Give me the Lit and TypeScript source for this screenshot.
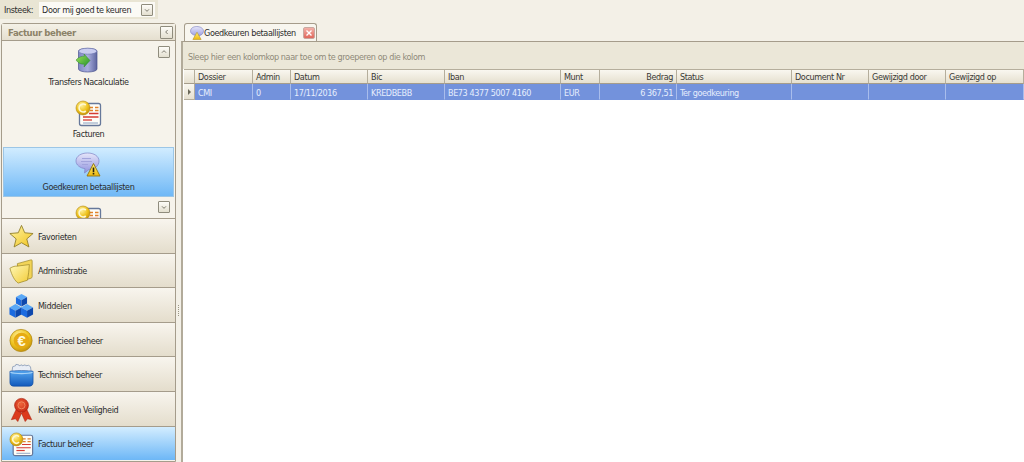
import { LitElement, html, css, svg } from "lit";
import { customElement } from "lit/decorators.js";

const defs = svg`
<defs>
  <linearGradient id="gCyl" x1="0" x2="1" y1="0" y2="0"><stop offset="0" stop-color="#7f88c4"/><stop offset=".5" stop-color="#a9aede"/><stop offset="1" stop-color="#5d659f"/></linearGradient>
  <linearGradient id="gGreen" x1="0" x2="1" y1="0" y2="1"><stop offset="0" stop-color="#a2e45a"/><stop offset="1" stop-color="#1f8f2c"/></linearGradient>
  <radialGradient id="gCoin" cx=".4" cy=".3" r=".8"><stop offset="0" stop-color="#fff2a0"/><stop offset=".55" stop-color="#eec21c"/><stop offset="1" stop-color="#b98406"/></radialGradient>
  <linearGradient id="gBubble" x1="0" x2="0" y1="0" y2="1"><stop offset="0" stop-color="#e6e6fa"/><stop offset="1" stop-color="#8f92de"/></linearGradient>
  <linearGradient id="gWarn" x1="0" x2="0" y1="0" y2="1"><stop offset="0" stop-color="#fff27a"/><stop offset="1" stop-color="#eeb70e"/></linearGradient>
  <linearGradient id="gStar" x1="0" x2="1" y1="0" y2="1"><stop offset="0" stop-color="#fff6a6"/><stop offset="1" stop-color="#f0c21e"/></linearGradient>
  <linearGradient id="gFolder" x1="0" x2="1" y1="0" y2="1"><stop offset="0" stop-color="#fff8b8"/><stop offset="1" stop-color="#f2cc38"/></linearGradient>
  <linearGradient id="gTray" x1="0" x2="0" y1="0" y2="1"><stop offset="0" stop-color="#55a6ef"/><stop offset="1" stop-color="#1259bb"/></linearGradient>
  <radialGradient id="gRib" cx=".45" cy=".4" r=".7"><stop offset="0" stop-color="#f0653a"/><stop offset="1" stop-color="#c0200f"/></radialGradient>
</defs>`;

const invoice = svg`
  <rect x="4.500" y="3.500" width="21" height="22" rx="2" fill="#fdfdf8" stroke="#66789a" stroke-width="1.300"/>
  <path d="M14 7.500h4M20 7.500h3.500M15 10.500h3M20 10.500h3.500" stroke="#e2832c" stroke-width="1.300"/>
  <path d="M14 13.500h9.500M8 17h15.500" stroke="#d63b32" stroke-width="1.300"/>
  <path d="M8 20h9" stroke="#d63b32" stroke-width="1.300"/>
  <path d="M8 23h15" stroke="#8aa0c0" stroke-width="1"/>
  <circle cx="8" cy="8" r="7" fill="url(#gCoin)" stroke="#b08712" stroke-width=".6"/>
  <path d="M10.800 5a4 4 0 1 0 0 6" fill="none" stroke="#fff8d0" stroke-width="1.700"/>`;

const cube = (x: number, y: number, s: number) => svg`
  <path d="M${x} ${y + s * .28}L${x + s * .5} ${y}L${x + s} ${y + s * .28}L${x + s * .5} ${y + s * .56}z" fill="#5aa8f6"/>
  <path d="M${x} ${y + s * .28}L${x + s * .5} ${y + s * .56}V${y + s * 1.14}L${x} ${y + s * .86}z" fill="#1c6be0"/>
  <path d="M${x + s} ${y + s * .28}L${x + s * .5} ${y + s * .56}V${y + s * 1.14}L${x + s} ${y + s * .86}z" fill="#0e48ad"/>`;

const icons: Record<string, unknown> = {
  db: svg`
    <path d="M3.500 4c0-3.500 18.500-3.500 18.500 0v18c0 4-18.500 4-18.500 0z" fill="url(#gCyl)" stroke="#4c5490" stroke-width=".7"/>
    <ellipse cx="12.750" cy="4.200" rx="9" ry="3" fill="#c9ccf0" stroke="#6a72ad" stroke-width=".6"/>
    <path d="M1 13c2.500-3 6-4 8.500-3.800L9 7l6 6.500-6 6.500.4-2.800C6 17.500 3 16 1 13z" fill="url(#gGreen)" stroke="#2f8a2a" stroke-width=".5" stroke-linejoin="round"/>`,
  invoice,
  bubble: svg`
    <path d="M12.500 1c6.500 0 11.500 3.200 11.500 8s-4.500 8.500-10 8.500l-4.500 3.500.5-4.300C5 16 1 13 1 9 1 4.200 6 1 12.500 1z" fill="url(#gBubble)" stroke="#8083c4" stroke-width=".7"/>
    <path d="M7 6.500h9M6 9.500h11M7 12.500h6" stroke="#a2a4dc" stroke-width="1"/>
    <path d="M18.500 11.500l6.500 12.500H12z" fill="url(#gWarn)" stroke="#8f7410" stroke-width=".9" stroke-linejoin="round"/>
    <path d="M18.500 15.500v4.500M18.500 20.800v1.700" stroke="#2a2410" stroke-width="1.600"/>`,
  star: svg`<path d="M13.500 1.500l3.500 8 9 .8-6.800 5.800 2.300 8.700-8-4.600-8 4.600 2.200-8.700L.9 10.300l9.100-.8z" fill="url(#gStar)" stroke="#8b7a24" stroke-width=".9" stroke-linejoin="round"/>`,
  folder: svg`
    <path d="M9 5L23.500 1c1-.3 1.500.3 1.500 1.200V19c0 1-.5 1.500-1.200 1.700L11 25z" fill="#f2d458" stroke="#a08a2a" stroke-width=".8"/>
    <path d="M1 10c3-2 6-2.500 8-2.300L22 6c-.5 6-1 12-2.200 17L10 26C6.500 24 3 18 1 10z" fill="url(#gFolder)" stroke="#a08a2a" stroke-width=".8" stroke-linejoin="round"/>`,
  cubes: svg`${cube(7.500, 1, 12)}${cube(0.500, 12, 13)}${cube(13, 12, 13)}`,
  coin: svg`
    <circle cx="13" cy="13.500" r="12" fill="url(#gCoin)" stroke="#b08712" stroke-width=".8"/>
    <circle cx="13.500" cy="13.500" r="8.500" fill="#e6aa12"/>
    <text x="13.500" y="19" text-anchor="middle" font-family="Liberation Sans" font-size="16" font-weight="700" fill="#fffbe0">€</text>`,
  tray: svg`
    <path d="M3 11l1-7 3-1 .5-1.500 3 .5.5 1 3-1 .5 1 3-1 .7 1 3-.5 2 1.500 1 7z" fill="#e8edf5" stroke="#6f86a8" stroke-width=".7"/>
    <path d="M1 9c4-1 21-1 25 0v12c0 3-2 4-4 4H5c-2 0-4-1-4-4z" fill="url(#gTray)" stroke="#0f4b9e" stroke-width=".7"/>
    <path d="M1.500 10c5 2 19 2 24 0" fill="none" stroke="#a6d2f8" stroke-width="1.200"/>`,
  ribbon: svg`
    <path d="M8.500 12L2.500 24.500l4.500-1L9.500 26.500l4-9zM18.500 12l6 12.500-4.500-1L17.500 26.500l-4-9z" fill="#dc3a1c" stroke="#a8200f" stroke-width=".6"/>
    <circle cx="13.500" cy="9" r="7.500" fill="url(#gRib)" stroke="#a8200f" stroke-width=".7"/>
    <circle cx="13.500" cy="9" r="3.800" fill="none" stroke="#f08a60" stroke-width="1"/>`,
  tabBubble: svg`
    <path d="M13 1c7 0 13 3.500 13 9s-5.500 9-11.500 9l-5 3.500 1-4.300C5 17 1 14 1 10 1 4.500 6 1 13 1z" fill="url(#gBubble)" stroke="#7c80c0" stroke-width="1.200"/>
    <path d="M13.500 12l8 14h-16z" fill="url(#gWarn)" stroke="#a68410" stroke-width=".9" stroke-linejoin="round"/>`,
};

const icon = (n: string, cls = "ic") =>
  html`<svg class=${cls} viewBox="0 0 27 27">${icons[n]}</svg>`;

const chev = (d: string) => {
  const p = d === "up" ? "M3 7l3-3 3 3" : d === "down" ? "M3 5l3 3 3-3" : "M7 3L4 6l3 3";
  return html`<svg viewBox="0 0 12 12" width="8" height="8"><path d=${p} fill="none" stroke="#5d5a4e" stroke-width="1.200"/></svg>`;
};

const cols = ["", "Dossier", "Admin", "Datum", "Bic", "Iban", "Munt", "Bedrag", "Status", "Document Nr", "Gewijzigd door", "Gewijzigd op"];
const row = ["", "CMI", "0", "17/11/2016", "KREDBEBB", "BE73 4377 5007 4160", "EUR", "6 367,51", "Ter goedkeuring", "", "", ""];
const nav = [
  ["star", "Favorieten"], ["folder", "Administratie"], ["cubes", "Middelen"], ["coin", "Financieel beheer"],
  ["tray", "Technisch beheer"], ["ribbon", "Kwaliteit en Veiligheid"], ["invoice", "Factuur beheer"],
];

@customElement("app-root")
export class AppRoot extends LitElement {
  static styles = css`
    :host { display: block; width: 1024px; height: 462px; overflow: hidden; background: #f3f0e7;
      font-family: "DejaVu Sans Condensed", "DejaVu Sans", sans-serif; font-size: 9px; letter-spacing: -0.4px; color: #2c2c2c; }
    .defs { position: absolute; width: 0; height: 0; }
    .toolbar { height: 19px; width: 158px; background: #e9e5d4; display: flex; align-items: center; padding-left: 4px; box-sizing: border-box; gap: 6px; }
    .combo { width: 116px; height: 15px; background: #fbfaf5; display: flex; align-items: center; justify-content: space-between; padding: 0 2px 0 3px; box-sizing: border-box; }
    .btn { width: 12px; height: 12px; border: 1px solid #8f8c7d; border-radius: 1px; background: linear-gradient(#fdfcf8, #e4e0d0); display: flex; align-items: center; justify-content: center; box-sizing: border-box; flex: none; }
    .main { display: flex; height: 443px; padding-top: 4px; box-sizing: border-box; }
    .side { width: 175px; margin-left: 1px; border: 1px solid #a59c8b; border-radius: 3px 3px 0 0; box-sizing: border-box; height: 439px; display: flex; flex-direction: column; background: #f6f3eb; flex: none; }
    .sidehead { height: 17px; flex: none; display: flex; align-items: center; justify-content: space-between; padding: 0 2px 0 6px; background: linear-gradient(#f4f1e7, #e5dfcf); border-bottom: 1px solid #a59c8b; font-weight: 700; color: #8c8268; font-size: 9.500px; box-sizing: border-box; }
    .sidehead .btn { width: 13px; height: 13px; }
    .list { position: relative; flex: none; height: 177px; overflow: hidden; padding: 1px 1px 0; box-sizing: border-box; display: flex; flex-direction: column; gap: 2.500px; }
    .item { flex: none; height: 50px; display: flex; flex-direction: column; align-items: center; padding-top: 5px; box-sizing: border-box; }
    .item.sel { background: linear-gradient(#d3edff, #6db7f6); outline: 1px solid #9cc6e6; outline-offset: -1px; }
    .item .ic { width: 27px; height: 27px; display: block; flex: none; }
    .item span { line-height: 14px; margin-top: 0.500px; }
    .scroll { position: absolute; right: 5px; }
    .scroll.up { top: 5px; }
    .scroll.down { top: 160px; }
    .nav { flex: 1; display: flex; flex-direction: column; }
    .nav div { flex: none; height: 34.600px; box-sizing: border-box; border-top: 1px solid #a59c8b; background: linear-gradient(#f8f5ee, #e4ddcc); display: flex; align-items: center; gap: 4px; padding-left: 7px; padding-top: 2px; }
    .nav div.sel { background: linear-gradient(#d3edff, #6db7f6); }
    .nav .ic { width: 25px; height: 25px; flex: none; }
    .split { flex: none; width: 5px; display: flex; align-items: flex-start; justify-content: center; padding-top: 282px; box-sizing: border-box; }
    .grip { width: 1px; height: 12px; background-image: linear-gradient(#9b9684 50%, transparent 50%); background-size: 1px 2px; }
    .content { flex: 1; min-width: 0; display: flex; flex-direction: column; }
    .tabs { height: 18px; flex: none; padding-left: 3px; display: flex; align-items: flex-end; }
    .tab { width: 133px; height: 18px; box-sizing: border-box; border: 1px solid #a59c8b; border-bottom: 0; border-radius: 3px 3px 0 0; background: #f8f6ef; display: flex; align-items: center; padding-left: 5px; gap: 0; white-space: nowrap; }
    .tab .tic { width: 14px; height: 14px; flex: none; }
    .tab .close { width: 12px; height: 12px; margin-left: auto; margin-right: 1px; background: linear-gradient(#f3b0a8, #e0685c); border: 1px solid #c9a8a0; border-radius: 2px; box-sizing: border-box; display: flex; flex: none; }
    .pane { flex: 1; border-top: 1px solid #a59c8b; border-left: 2px solid #b2ab9a; background: #fff; display: flex; flex-direction: column; min-height: 0; }
    .group { height: 27px; flex: none; background: #ebe7d8; color: #8f8a78; display: flex; align-items: center; padding-left: 5px; box-sizing: border-box; padding-top: 2px; }
    .grid { padding-left: 1px; }
    .r { display: grid; grid-template-columns: 11px 58px 38px 77px 77px 116px 39px 77px 115px 77px 77px 78px; }
    .hd { height: 15px; }
    .hd > div { background: linear-gradient(#f9f7f0, #e6e0cf); border-right: 1px solid #b5ae9c; border-top: 1px solid #b5ae9c; border-bottom: 1px solid #a59c8b; display: flex; align-items: center; padding-left: 3px; box-sizing: border-box; min-width: 0; white-space: nowrap; color: #3a3a36; overflow: hidden; }
    .bd { height: 16px; background: #7392dc; color: #e6eefc; }
    .bd > div { border-right: 1px solid #a9bdec; display: flex; align-items: center; padding-left: 3px; padding-top: 2px; box-sizing: border-box; white-space: nowrap; border-bottom: 1px solid #7392dc; }
    .bd > div.rh { background: linear-gradient(#f9f7f0, #e6e0cf); border-right: 1px solid #b5ae9c; border-bottom: 1px solid #b5ae9c; padding-left: 4px; padding-top: 0; }
    .hd > div.right, .bd > div.right { justify-content: flex-end; padding-right: 3px; }
    .caret { width: 0; height: 0; border-left: 3px solid #6b6858; border-top: 3px solid transparent; border-bottom: 3px solid transparent; }
    .x { stroke: #fff; stroke-width: 1.400; }
  `;

  render() {
    return html`
      <svg class="defs">${defs}</svg>
      <div class="toolbar">
        <span>Insteek:</span>
        <div class="combo"><span>Door mij goed te keuren</span><div class="btn">${chev("down")}</div></div>
      </div>
      <div class="main">
        <div class="side">
          <div class="sidehead"><span>Factuur beheer</span><div class="btn">${chev("left")}</div></div>
          <div class="list">
            <div class="item">${icon("db")}<span>Transfers Nacalculatie</span></div>
            <div class="item">${icon("invoice")}<span>Facturen</span></div>
            <div class="item sel">${icon("bubble")}<span>Goedkeuren betaallijsten</span></div>
            <div class="item">${icon("invoice")}</div>
            <div class="btn scroll up">${chev("up")}</div>
            <div class="btn scroll down">${chev("down")}</div>
          </div>
          <div class="nav">
            ${nav.map(([i, t]) => html`<div class=${t === "Factuur beheer" ? "sel" : ""}>${icon(i)}<span>${t}</span></div>`)}
          </div>
        </div>
        <div class="split"><div class="grip"></div></div>
        <div class="content">
          <div class="tabs">
            <div class="tab">
              ${icon("tabBubble", "tic")}<span>Goedkeuren betaallijsten</span>
              <div class="close"><svg viewBox="0 0 10 10" width="10" height="10"><path class="x" d="M2.500 2.500l5 5M7.500 2.500l-5 5"/></svg></div>
            </div>
          </div>
          <div class="pane">
            <div class="group">Sleep hier een kolomkop naar toe om te groeperen op die kolom</div>
            <div class="grid">
              <div class="r hd">${cols.map((c) => html`<div class=${c === "Bedrag" ? "right" : ""}>${c}</div>`)}</div>
              <div class="r bd">${row.map((c, i) => i === 0 ? html`<div class="rh"><div class="caret"></div></div>` : html`<div class=${i === 7 ? "right" : ""}>${c}</div>`)}</div>
            </div>
          </div>
        </div>
      </div>
    `;
  }
}
